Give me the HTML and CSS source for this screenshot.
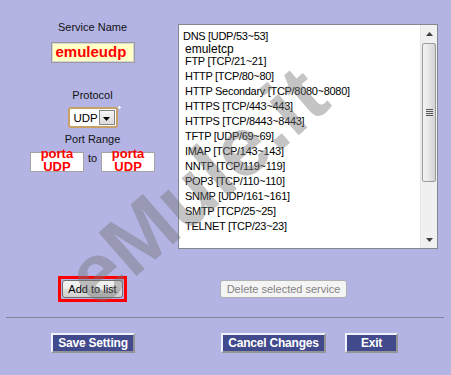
FILE: index.html
```html
<!DOCTYPE html>
<html>
<head>
<meta charset="utf-8">
<title>Port Services</title>
<link rel="stylesheet" href="styles.css">
</head>
<body>
<div class="page">
  <div class="top">
    <div class="left">
      <div class="label label-service">Service Name</div>
      <div class="name-input">emuleudp</div>
      <div class="label label-protocol">Protocol</div>
      <div class="select">
        <span class="select-value">UDP</span>
        <span class="select-btn"><svg width="7" height="4" viewBox="0 0 7 4"><path d="M0 0H7L3.5 4Z" fill="#000"/></svg></span>
        <span class="sparkle"></span>
      </div>
      <div class="label label-range">Port Range</div>
      <div class="range">
        <div class="port"><span class="port-text">porta<br>UDP</span></div>
        <span class="to">to</span>
        <div class="port"><span class="port-text">porta<br>UDP</span></div>
      </div>
    </div>
    <div class="listbox">
      <ul class="items">
        <li class="dns">DNS [UDP/53~53]</li>
        <li class="emule">emuletcp</li>
        <li>FTP [TCP/21~21]</li>
        <li>HTTP [TCP/80~80]</li>
        <li>HTTP Secondary [TCP/8080~8080]</li>
        <li>HTTPS [TCP/443~443]</li>
        <li>HTTPS [TCP/8443~8443]</li>
        <li>TFTP [UDP/69~69]</li>
        <li>IMAP [TCP/143~143]</li>
        <li>NNTP [TCP/119~119]</li>
        <li>POP3 [TCP/110~110]</li>
        <li>SNMP [UDP/161~161]</li>
        <li>SMTP [TCP/25~25]</li>
        <li>TELNET [TCP/23~23]</li>
      </ul>
      <div class="scrollbar">
        <div class="sb-arrow"><svg width="7" height="4" viewBox="0 0 7 4"><path d="M3.5 0L7 4H0Z" fill="#404040"/></svg></div>
        <div class="sb-track">
          <div class="sb-thumb"><span class="grip"></span></div>
        </div>
        <div class="sb-arrow"><svg width="7" height="4" viewBox="0 0 7 4"><path d="M0 0H7L3.5 4Z" fill="#404040"/></svg></div>
      </div>
    </div>
  </div>
  <div class="actions">
    <div class="addwrap"><button class="btn-sys btn-add">Add to list</button></div>
    <button class="btn-sys btn-del">Delete selected service</button>
  </div>
  <div class="sep"></div>
  <div class="footer">
    <button class="btn-blue btn-save">Save Setting</button>
    <button class="btn-blue btn-cancel">Cancel Changes</button>
    <button class="btn-blue btn-exit">Exit</button>
  </div>
  <div class="watermark">eMule.it</div>
</div>
</body>
</html>
```

FILE: styles.css
```css
body {
  margin: 0;
  background: #b4b4e4;
  font-family: "Liberation Sans", Arial, sans-serif;
  font-size: 11px;
  color: #111;
}
.page {
  position: relative;
  width: 451px;
  height: 375px;
  overflow: hidden;
}
.top {
  display: flex;
  padding-top: 24px;
  height: 225px;
}
.left {
  width: 171px;
  padding-left: 7px;
  display: flex;
  flex-direction: column;
  align-items: center;
}
.label {
  line-height: 13px;
  white-space: nowrap;
}
.label-service { margin-top: -3px; }
.name-input {
  margin-top: 8px;
  width: 84px;
  height: 21px;
  box-sizing: border-box;
  border: 1px solid #9a9a9a;
  box-shadow: inset 0 0 0 1px #d6d6d6;
  background: #ffffc6;
  color: #f00;
  font-weight: bold;
  font-size: 15px;
  line-height: 18px;
  padding-left: 4px;
}
.label-protocol { margin-top: 26px; }
.select {
  position: relative;
  margin-top: 5px;
  width: 50px;
  height: 21px;
  box-sizing: border-box;
  border: 2px solid #c9a066;
  border-radius: 3px;
  background: #fff;
  display: flex;
  align-items: center;
}
.select-value {
  flex: 1;
  padding-left: 4px;
  font-size: 11.5px;
  color: #000;
}
.select-btn {
  width: 16px;
  height: 15px;
  box-sizing: border-box;
  margin-right: 1px;
  border: 1px solid #858585;
  background: linear-gradient(#f4f4f4, #dcdcdc);
  display: flex;
  align-items: center;
  justify-content: center;
  padding-top: 2px;
}
.sparkle {
  position: absolute;
  right: -5px;
  top: -3px;
  width: 3px;
  height: 3px;
  background:
    linear-gradient(#fff, #fff) center / 3px 1px no-repeat,
    linear-gradient(#fff, #fff) center / 1px 3px no-repeat;
}
.label-range { margin-top: 5px; }
.range {
  margin-top: 6px;
  display: flex;
  align-items: flex-start;
}
.to {
  line-height: 13px;
  padding: 0 4px 0 4px;
}
.port {
  width: 54px;
  height: 20px;
  box-sizing: border-box;
  border: 1px solid #a4a4a4;
  background: #fff;
  display: flex;
  flex-direction: column;
  justify-content: flex-end;
  align-items: center;
}
.port-text {
  display: block;
  margin-bottom: -2px;
  text-align: center;
  color: #f00;
  font-weight: bold;
  font-size: 13px;
  line-height: 12.5px;
}

.listbox {
  width: 260px;
  height: 225px;
  box-sizing: border-box;
  border: 1px solid #828790;
  background: #fff;
  display: flex;
}
.items {
  flex: 1;
  list-style: none;
  margin: 0;
  padding: 3px 0 0 6px;
  font-size: 11px;
  letter-spacing: -0.3px;
  color: #000;
}
.items li {
  line-height: 15px;
  white-space: nowrap;
}
.items .dns {
  margin-left: -2px;
  line-height: 16px;
}
.items .emule {
  font-size: 12px;
  line-height: 10px;
  letter-spacing: 0;
}
.scrollbar {
  width: 16px;
  background: #f0f0f0;
  border-left: 1px solid #e6e6e6;
  display: flex;
  flex-direction: column;
}
.sb-arrow {
  height: 17px;
  display: flex;
  align-items: center;
  justify-content: center;
}
.sb-track {
  flex: 1;
  padding: 1px 1px 0;
}
.sb-thumb {
  height: 139px;
  box-sizing: border-box;
  border: 1px solid #9b9b9b;
  border-radius: 2px;
  background: linear-gradient(to right, #f3f3f3, #e8e8e8 45%, #d2d2d2);
  display: flex;
  align-items: center;
  justify-content: center;
}
.grip {
  width: 7px;
  height: 7px;
  background: repeating-linear-gradient(#555 0 1px, transparent 1px 2px);
}

.actions {
  display: flex;
  align-items: center;
  padding-left: 58px;
  margin-top: 27px;
}
.addwrap {
  border: 3px solid #f00;
  padding: 1px;
  display: flex;
}
.btn-sys {
  box-sizing: border-box;
  height: 18px;
  padding: 0;
  border: 1px solid #707070;
  border-radius: 3px;
  background: linear-gradient(#f2f2f2 0, #ebebeb 50%, #dddddd 50%, #cfcfcf 100%);
  font-family: "Liberation Sans", Arial, sans-serif;
  font-size: 11px;
  color: #000;
}
.btn-add { width: 61px; }
.btn-del {
  width: 127px;
  margin-left: 93px;
  border-color: #adb2b5;
  background: #f4f4f4;
  color: #838383;
}
.sep {
  margin: 15px 7px 0 6px;
  height: 1px;
  background: #82829a;
}
.footer {
  display: flex;
  padding-left: 51px;
  margin-top: 15px;
}
.btn-blue {
  box-sizing: border-box;
  height: 20px;
  padding: 0;
  border: 2px solid;
  border-color: #f2f2fa #939398 #939398 #f2f2fa;
  background: #424a8e;
  color: #fff;
  font-family: "Liberation Sans", Arial, sans-serif;
  font-weight: bold;
  font-size: 12px;
  letter-spacing: -0.2px;
}
.btn-save { width: 84px; }
.btn-cancel { width: 105px; margin-left: 86px; }
.btn-exit { width: 53px; margin-left: 19px; }

.watermark {
  position: absolute;
  left: 196px;
  top: 186px;
  transform: translate(-50%, -50%) rotate(-41deg);
  font-family: "Liberation Sans", Arial, sans-serif;
  font-weight: bold;
  font-size: 84px;
  line-height: 1;
  white-space: nowrap;
  color: rgba(115, 115, 115, 0.42);
  pointer-events: none;
}
```
